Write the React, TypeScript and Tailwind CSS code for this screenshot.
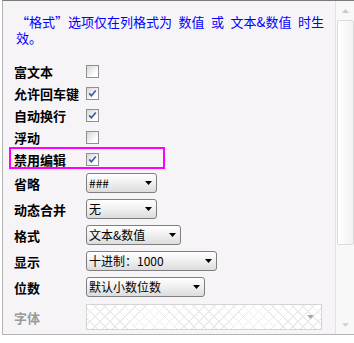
import React from 'react';

function Check({ checked }: { checked?: boolean }) {
  return (
    <span className="w-[13px] h-[13px] border border-[#8e8f8f] bg-[linear-gradient(135deg,#d6d6d6,#ffffff_75%)] flex items-center justify-center shrink-0">
      {checked && (
        <svg width="9" height="9" viewBox="0 0 9 9">
          <path d="M1.2 4.4 L3.4 6.8 L7.8 1.4" fill="none" stroke="#3b5aa6" strokeWidth="1.6" />
        </svg>
      )}
    </span>
  );
}

function Arrow({ color = '#000' }: { color?: string }) {
  return (
    <svg width="7" height="4" viewBox="0 0 7 4" className="shrink-0">
      <path d="M0 0 H7 L3.5 4 Z" fill={color} />
    </svg>
  );
}

function Select({ className, text }: { className: string; text: string }) {
  return (
    <div
      className={`${className} h-[20px] rounded-[3px] border border-[#7f7f7f] bg-[linear-gradient(#ffffff,#f1f1f1_45%,#dcdcdc)] flex items-center justify-between pl-[2px] pr-[4px] text-[12px] leading-none text-black`}
    >
      <span className="whitespace-nowrap">{text}</span>
      <Arrow />
    </div>
  );
}

const CHECK_ROWS: { label: string; checked: boolean; mark?: boolean }[] = [
  { label: '富文本', checked: false },
  { label: '允许回车键', checked: true },
  { label: '自动换行', checked: true },
  { label: '浮动', checked: false },
  { label: '禁用编辑', checked: true, mark: true },
];

const SELECT_ROWS: { label: string; text: string; w: string }[] = [
  { label: '省略', text: '###', w: 'w-[71px]' },
  { label: '动态合并', text: '无', w: 'w-[71px]' },
  { label: '格式', text: '文本&数值', w: 'w-[95px]' },
  { label: '显示', text: '十进制：1000', w: 'w-[131px]' },
  { label: '位数', text: '默认小数位数', w: 'w-[119px]' },
];

export default function App() {
  return (
    <div className="w-[354px] h-[343px] bg-white overflow-hidden font-['Noto_Sans_CJK_SC','Liberation_Sans',sans-serif]">
      <div className="ml-[2px] h-[335px] flex border-l border-b border-[#b4b4b4] border-t border-t-[#7a7a7a]">
        {/* content */}
        <div className="flex-1 bg-[#f7f4f8] pl-[11px] pt-[13px] overflow-hidden">
          <div className="ml-[2px] text-[13px] leading-[16px] text-[#0000ff] whitespace-nowrap flex flex-col">
            <span className="h-[16px]">“格式”选项仅在列格式为{'\u2002'}数值{'\u2002'}或{'\u2002'}文本&amp;数值{'\u2002'}时生</span>
            <span className="h-[16px]">效。</span>
          </div>

          <div className="mt-[14px]">
            {CHECK_ROWS.map((r) => (
              <div key={r.label} className="relative h-[22px] flex items-center">
                <span className="w-[72px] text-[13px] font-bold leading-none text-black">{r.label}</span>
                <Check checked={r.checked} />
                {r.mark && (
                  <div className="absolute left-[-5px] top-[-1px] w-[156px] h-[22px] border-2 border-[#ff00ff]" />
                )}
              </div>
            ))}

            {SELECT_ROWS.map((r) => (
              <div key={r.label} className="h-[26px] flex items-center">
                <span className="w-[72px] text-[13px] font-bold leading-none text-black">{r.label}</span>
                <Select className={r.w} text={r.text} />
              </div>
            ))}

            <div className="h-[34px] flex items-center">
              <span className="w-[72px] text-[13px] font-bold leading-none text-[#9a9a9a]">字体</span>
              <div className="w-[236px] h-[26px] border border-[#d4d4d4] bg-white bg-[repeating-linear-gradient(45deg,#ececec_0_1px,transparent_1px_7px),repeating-linear-gradient(-45deg,#ececec_0_1px,transparent_1px_7px)] flex items-center justify-end pr-[7px]">
                <Arrow color="#a8a8a8" />
              </div>
            </div>
          </div>
        </div>

        {/* scrollbar */}
        <div className="w-[19px] border-l border-[#e2e2e2] bg-[#f8f8f8] flex flex-col items-center">
          <div className="h-[19px] flex items-center">
            <svg width="7" height="4" viewBox="0 0 7 4">
              <path d="M0 4 H7 L3.5 0 Z" fill="#c9c9c9" />
            </svg>
          </div>
          <div className="w-[17px] h-[225px] rounded-[2px] border border-[#dadada] bg-[linear-gradient(90deg,#ffffff,#f2f2f2)]" />
          <div className="flex-1" />
          <div className="h-[19px] flex items-center">
            <svg width="7" height="4" viewBox="0 0 7 4">
              <path d="M0 0 H7 L3.5 4 Z" fill="#d4d4d4" />
            </svg>
          </div>
        </div>
      </div>
    </div>
  );
}
